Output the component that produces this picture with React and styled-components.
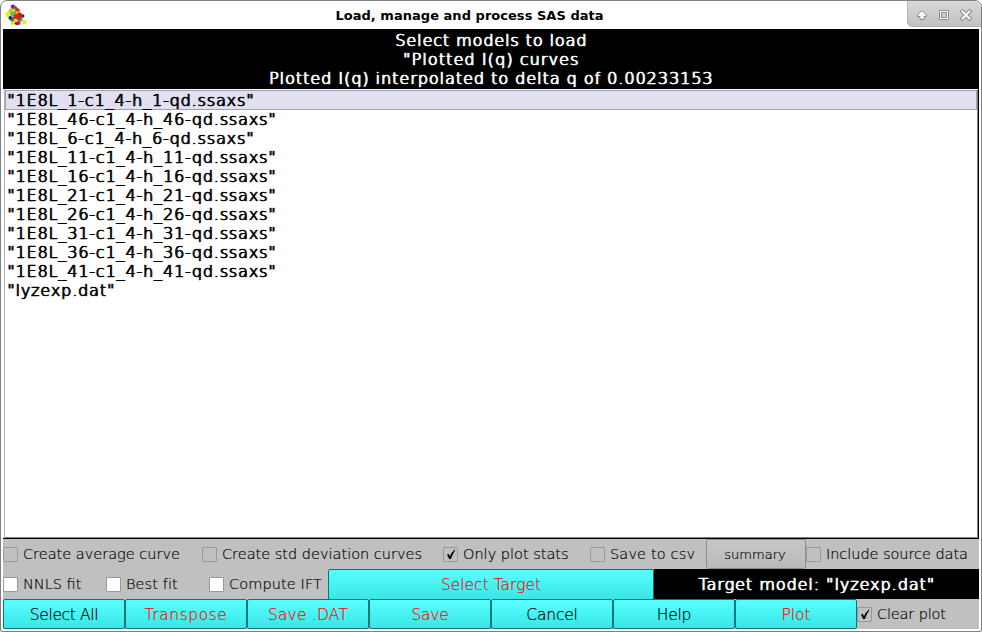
import React from 'react';
import styled, { createGlobalStyle, css } from 'styled-components';

const Global = createGlobalStyle`
  * { box-sizing: border-box; }
  html, body { margin: 0; background: #fff; overflow: hidden; }
  body { font-family: "DejaVu Sans", sans-serif; color: #000; }
`;

const Window = styled.main`
  width: 982px;
  height: 632px;
  padding: 0 2px 2px;
  border: 1px solid #808080;
  border-radius: 7px 7px 2px 2px;
  background: #fff;
  display: flex;
  flex-direction: column;
  overflow: hidden;
`;

const TitleBar = styled.header`
  height: 28px;
  flex: none;
  display: grid;
  grid-template-columns: 24px 1fr 74px;
  margin-right: -2px;
`;

const AppIcon = styled.svg`
  width: 24px;
  height: 24px;
  margin: 2px 0 0 0;
`;

const Title = styled.h1`
  margin: 0;
  font-size: 13px;
  font-weight: 700;
  line-height: 29px;
  text-align: center;
  padding-left: 5px;
  letter-spacing: 0.03px;
`;

const Controls = styled.div`
  height: 26px;
  display: flex;
  align-items: center;
  padding-left: 7px;
  gap: 8px;
  border-left: 1px solid #b5b5b5;
  border-bottom: 1px solid #b0b0b0;
  border-bottom-left-radius: 5px;
  background: linear-gradient(#d8d8d8, #c2c2c2);
`;

const ControlIcon = styled.svg`
  width: 14px;
  height: 14px;
  flex: none;
  margin-top: 3px;
`;

const thin = css`
  font-weight: 200;
  font-size: 14.5px;
  -webkit-text-stroke: 0.18px currentColor;
`;

const thick = css`
  font-weight: 200;
  font-size: 16px;
  -webkit-text-stroke: 0.4px currentColor;
  text-shadow: 0.5px 0 0 currentColor, 1px 0 0 currentColor;
`;

const Banner = styled.div`
  height: 60px;
  flex: none;
  padding-top: 2px;
  background: #000;
  color: #fff;
  text-align: center;
  line-height: 19px;
  ${thick}
`;

const BannerLine = styled.div`
  letter-spacing: ${(p) => p.$spacing || 0}px;
`;

const ListFrame = styled.div`
  height: 450px;
  flex: none;
  padding-left: 1px;
  border-bottom: 1px solid #000;
  border-right: 1px solid #000;
`;

const List = styled.ul`
  height: 449px;
  margin: 0;
  padding: 0;
  list-style: none;
  border-top: 1px solid #fff;
  border-left: 1px solid #b4b4b4;
  border-right: 1px solid #808080;
  border-bottom: 1px solid #808080;
`;

const Item = styled.li`
  height: 19px;
  line-height: 21px;
  padding-left: 2px;
  white-space: pre;
  ${thick}
  letter-spacing: 0.86px;
  &:first-child {
    height: 20px;
    margin-bottom: -1px;
    background: #e1e0f0;
    box-shadow: inset 0 0 0 1px #a09fc0;
  }
`;

const Row = styled.div`
  height: 30px;
  flex: none;
  display: grid;
  grid-template-columns: ${(p) => p.$columns};
  background: #c0c0c0;
`;

const CheckLabel = styled.label`
  display: flex;
  align-items: center;
  white-space: nowrap;
  padding-bottom: ${(p) => (p.$white ? '1px' : '0')};
  ${thin}
`;

const Box = styled.span`
  width: 15px;
  height: 15px;
  flex: none;
  margin-right: 5px;
  border: 1px solid #999;
  border-radius: 1px;
  background: ${(p) => (p.$white ? '#fff' : 'transparent')};
  display: grid;
  place-items: center;
`;

const Text = styled.span`
  letter-spacing: ${(p) => p.$spacing || 0}px;
`;

const Button = styled.button`
  margin: 0;
  padding: 1px 0 0;
  font-family: inherit;
  ${thin}
  font-size: 15.5px;
  letter-spacing: ${(p) => p.$spacing || 0}px;
  border: 1px solid #00787c;
  border-radius: 2px;
  background: linear-gradient(#5affff, #38e6e6);
  color: ${(p) => (p.$red ? '#f00' : '#000')};
`;

const Summary = styled(Button)`
  padding-right: 2px;
  font-size: 13px;
  border-color: #909090;
  background: linear-gradient(#c6c6c6, #bababa);
`;

const Target = styled.div`
  background: #000;
  color: #fff;
  text-align: center;
  line-height: 31px;
  ${thick}
  letter-spacing: 0.95px;
`;

const atoms = [
  [13, 6.7, 2.2, '#b000b8'], [15, 8.5, 2.3, '#246b58'], [11, 11, 2.5, '#d4c400'], [14, 11, 2.5, '#dbd818'],
  [17.5, 10.5, 2.3, '#e02018'], [8, 14.5, 2.8, '#eeee18'], [12.5, 14, 2.4, '#25c8c8'], [15.5, 13.5, 2.4, '#b49a10'],
  [18, 13, 2.3, '#c4b813'], [10.5, 18, 2, '#101494'], [13, 19.5, 2.6, '#1c7464'], [16, 17, 2.7, '#df2014'],
  [22.8, 16, 1.7, '#1717bb'], [19.5, 15, 2.4, '#e31818'], [21, 16.2, 1.9, '#c91428'], [20.5, 19.5, 2.2, '#24b5b0'],
  [18.5, 18.5, 2.2, '#c03018'], [12.5, 23, 2.1, '#eae018'], [16.5, 23.3, 1.8, '#171aba'], [18.5, 23, 2, '#e21616'],
  [24.5, 22, 2.3, '#f0ee18'], [15.5, 20.5, 2.1, '#e4d818'],
];

const Molecule = () => (
  <AppIcon viewBox="3 3 24 24">
    {atoms.map(([x, y, r, fill], i) => <circle key={i} cx={x} cy={y} r={r} fill={fill} />)}
  </AppIcon>
);

const Tick = () => (
  <svg width="10" height="11" viewBox="0 0 10 11">
    <path d="M1 5.5 L3 5 L4 7.5 Q5.5 3 8.8 .5 L9.3 1 Q6.5 5 5 10 H3.2 Z" fill="#000" />
  </svg>
);

const Check = ({ label, checked, white, spacing }) => (
  <CheckLabel $white={white}>
    <Box $white={white}>{checked && <Tick />}</Box>
    <Text $spacing={spacing}>{label}</Text>
  </CheckLabel>
);

const files = [
  '1E8L_1-c1_4-h_1-qd.ssaxs', '1E8L_46-c1_4-h_46-qd.ssaxs', '1E8L_6-c1_4-h_6-qd.ssaxs',
  '1E8L_11-c1_4-h_11-qd.ssaxs', '1E8L_16-c1_4-h_16-qd.ssaxs', '1E8L_21-c1_4-h_21-qd.ssaxs',
  '1E8L_26-c1_4-h_26-qd.ssaxs', '1E8L_31-c1_4-h_31-qd.ssaxs', '1E8L_36-c1_4-h_36-qd.ssaxs',
  '1E8L_41-c1_4-h_41-qd.ssaxs', 'lyzexp.dat',
];

export default function App() {
  return (
    <>
      <Global />
      <Window>
        <TitleBar>
          <Molecule />
          <Title>Load, manage and process SAS data</Title>
          <Controls>
            <ControlIcon viewBox="0 0 14 14">
              <path d="M7 2.5 L11.5 7 V8.5 H9 V11.5 H5 V8.5 H2.5 V7 Z" fill="#fff" stroke="#888" />
            </ControlIcon>
            <ControlIcon viewBox="0 0 14 14">
              <path d="M2.5 2.5 H11.5 V11.5 H2.5 Z" fill="#fff" stroke="#888" />
              <path d="M4.5 4.5 H9.5 V9.5 H4.5 Z" fill="#ccc" stroke="#888" />
            </ControlIcon>
            <ControlIcon viewBox="0 0 14 14">
              <path d="M3.5 3.5 L10.5 10.5 M10.5 3.5 L3.5 10.5" stroke="#888" strokeWidth="4" strokeLinecap="square" />
              <path d="M3.5 3.5 L10.5 10.5 M10.5 3.5 L3.5 10.5" stroke="#fff" strokeWidth="2" strokeLinecap="square" />
            </ControlIcon>
          </Controls>
        </TitleBar>
        <Banner>
          <BannerLine $spacing={0.9}>Select models to load</BannerLine>
          <BannerLine $spacing={1.1}>"Plotted I(q) curves</BannerLine>
          <BannerLine $spacing={0.97}>Plotted I(q) interpolated to delta q of 0.00233153</BannerLine>
        </Banner>
        <ListFrame>
          <List>{files.map((f) => <Item key={f}>{`"${f}"`}</Item>)}</List>
        </ListFrame>
        <Row $columns="199px 241px 147px 116px 100px 1fr">
          <Check label="Create average curve" />
          <Check label="Create std deviation curves" />
          <Check label="Only plot stats" checked />
          <Check label="Save to csv" spacing={0.15} />
          <Summary>summary</Summary>
          <Check label="Include source data" spacing={-0.05} />
        </Row>
        <Row $columns="103px 103px 119px 326px 1fr">
          <Check label="NNLS fit" white />
          <Check label="Best fit" white spacing={0.1} />
          <Check label="Compute IFT" white spacing={0.1} />
          <Button $red>Select Target</Button>
          <Target>Target model: "lyzexp.dat"</Target>
        </Row>
        <Row $columns="repeat(7, 122px) 1fr">
          <Button $spacing={-0.35}>Select All</Button>
          <Button $red $spacing={0.55}>Transpose</Button>
          <Button $red $spacing={0.2}>Save .DAT</Button>
          <Button $red $spacing={-0.2}>Save</Button>
          <Button $spacing={-0.2}>Cancel</Button>
          <Button $spacing={-0.2}>Help</Button>
          <Button $red>Plot</Button>
          <Check label="Clear plot" checked spacing={-0.15} />
        </Row>
      </Window>
    </>
  );
}
